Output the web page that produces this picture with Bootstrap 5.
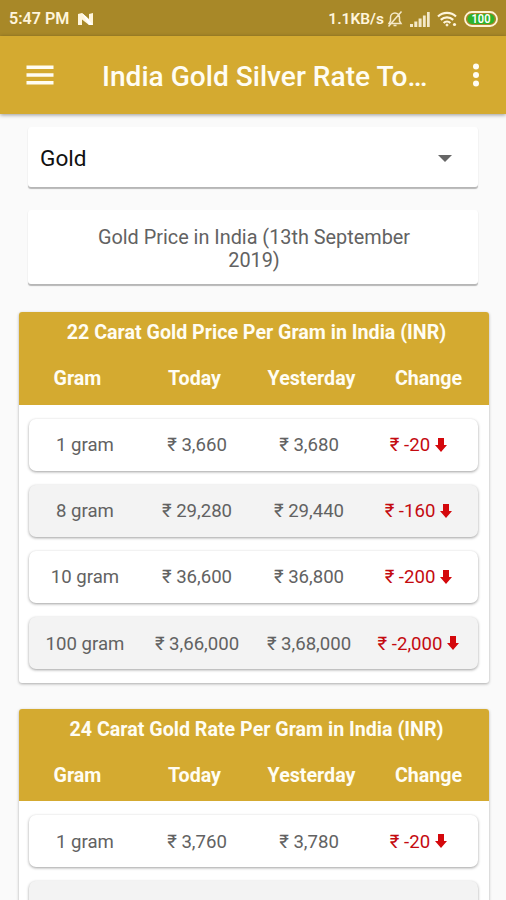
<!DOCTYPE html>
<html lang="en">
<head>
<meta charset="utf-8">
<meta name="viewport" content="width=device-width, initial-scale=1">
<title>India Gold Silver Rate Today</title>
<link href="https://cdn.jsdelivr.net/npm/bootstrap@5.3.0/dist/css/bootstrap.min.css" rel="stylesheet">
<style>
  html, body { height: 900px; overflow: hidden; }
  body { background: #fafafa; font-family: Roboto, "Liberation Sans", sans-serif; color: #626262; }
  .status-bar { height: 36px; background: #a88828; color: #fff5dc; font-size: 16.1px; font-weight: 600; padding: 2px 8px 0 9px; line-height: 1; }
  .st-time, .st-speed { padding-top: 1px; }
  .st-speed { font-size: 15.5px; }
  .status-bar svg, .app-bar svg { display: block; flex: none; }
  .st-bell { margin-left: 3px; }
  .st-signal { margin-left: 7px; }
  .st-wifi, .st-battery { margin-left: 7px; }
  .app-bar { height: 78px; background: #d4aa30; color: #fffdf3; padding: 0 20px 0 26px; box-shadow: 0 1px 4px rgba(0,0,0,.4); }
  .app-title { font-size: 28.1px; font-weight: 500; line-height: 1; margin-left: 48px; white-space: nowrap; padding-top: 4px; }
  .page { height: 786px; overflow: hidden; padding: 13px 28px 0; }
  .picker { height: 60px; border-radius: 3px; padding: 3px 26px 0 12px; color: #111; font-size: 22.6px; background: #fff; box-shadow: 0 1.5px 1px rgba(0,0,0,.27); }
  .caption-box { height: 74px; margin-top: 22.5px; border-radius: 3px; background: #fff; box-shadow: 0 1.5px 1px rgba(0,0,0,.27); font-size: 19.85px; line-height: 23px; padding: 5px 58px 0 60px; }
  .rates { margin: 28.5px -11px 0 -9px; background: #fff; border-radius: 3px; box-shadow: 0 1px 3px rgba(0,0,0,.32); padding-bottom: 14px; }
  .rates + .rates { margin-top: 25.5px; }
  .rates-head { height: 92.5px; background: #d4aa30; color: #fffdf3; font-weight: 700; border-radius: 3px 3px 0 0; font-size: 19.65px; line-height: 24px; padding-top: 9px; white-space: nowrap; }
  .head-title { padding-left: 5px; }
  .rates-head .labels { margin-top: 22px; padding-right: 2px; }
  .rates-body { padding: 14px 11px 0 10px; display: grid; row-gap: 14.2px; }
  .rate-row { height: 52px; border-radius: 7px; background: #fff; box-shadow: 0 1px 3px rgba(0,0,0,.38); font-size: 18.6px; white-space: nowrap; padding: 3px 1px 0 0; }
  .rate-row:nth-child(even) { background: #f3f3f3; }
  .drop { color: #c40a10; padding-right: 5px; }
  .drop svg { margin-left: 5px; vertical-align: -.5px; }
</style>
</head>
<body>
<header>
  <div class="status-bar d-flex align-items-center">
    <span class="st-time">5:47 PM</span>
    <svg class="ms-2" width="17" height="13" viewBox="0 0 17 13"><path d="M1 1l4-1 7 6V1l4-1v12h-4L5 6.500V12H1z" fill="#fff5dc"/><path d="M5 0l7 12h4L9.500 4z" fill="#fff"/></svg>
    <span class="st-speed ms-auto">1.1KB/s</span>
    <svg class="st-bell" width="16" height="18" viewBox="0 0 16 18" fill="none" stroke="#f4e8c8" stroke-width="1.500"><path d="M2 13.500h12l-1.500-2.500V7.500A4.500 4.500 0 0 0 8 3a4.500 4.500 0 0 0-4.500 4.500V11zM6.500 15.500h3M14.500 1.500L1.500 16.500"/></svg>
    <svg class="st-signal" width="20" height="15" viewBox="0 0 20 15" fill="#f4e8c8"><path d="M0 12h3v3H0zM4.300 9.500h3V15h-3zM8.600 6.500h3V15h-3zM12.900 3.500h2.800V15h-2.800zM17 0h2.700v15H17z"/></svg>
    <svg class="st-wifi" width="20" height="16" viewBox="0 0 20 16" fill="none" stroke="#fff5dc" stroke-width="2.200"><path d="M1 5.500a13 13 0 0 1 18 0M3.800 8.900a9 9 0 0 1 12.400 0M6.600 12a5 5 0 0 1 6.800 0"/><circle cx="10" cy="14" r="1" fill="#fff5dc" stroke-width="1"/><circle cx="17.500" cy="13.500" r="1.600" fill="#fff5dc" stroke="none"/></svg>
    <svg class="st-battery" width="34" height="16" viewBox="0 0 34 16"><rect x="1" y="1" width="32" height="14" rx="7" fill="none" stroke="#fff3d6" stroke-width="1.800"/><rect x="3.500" y="3" width="27" height="10" rx="5" fill="#2db32a"/><text x="17" y="12.300" text-anchor="middle" font-size="12" font-weight="600" fill="#fff" textLength="19" lengthAdjust="spacingAndGlyphs">100</text></svg>
  </div>
  <nav class="app-bar d-flex align-items-center position-relative">
    <svg width="28" height="20" viewBox="0 0 28 20" fill="#fffdf3"><path d="M.5.500h27V4H.5zM.5 8.200h27v3.600H.5zM.5 16h27v3.500H.5z"/></svg>
    <div class="app-title">India Gold Silver Rate To…</div>
    <svg class="ms-auto" width="20" height="24" viewBox="0 0 20 24" fill="#fffdf3"><circle cx="10" cy="3.500" r="3"/><circle cx="10" cy="12" r="3"/><circle cx="10" cy="20.500" r="3"/></svg>
  </nav>
</header>

<main class="page">
  <div class="picker d-flex align-items-center justify-content-between">
    <span>Gold</span>
    <svg width="14" height="7" viewBox="0 0 14 7"><path d="M0 0h14L7 7z" fill="#666"/></svg>
  </div>
  <div class="caption-box d-flex align-items-center text-center"><span class="w-100">Gold Price in India (13th September 2019)</span></div>

  <section class="rates">
    <div class="rates-head text-center">
      <div class="head-title">22 Carat Gold Price Per Gram in India (INR)</div>
      <div class="labels row g-0"><div class="col-3">Gram</div><div class="col-3">Today</div><div class="col-3">Yesterday</div><div class="col-3">Change</div></div>
    </div>
    <div class="rates-body text-center">
      <div class="rate-row row g-0 align-items-center"><div class="col-3">1 gram</div><div class="col-3">₹ 3,660</div><div class="col-3">₹ 3,680</div><div class="col-3 drop">₹ -20<svg width="12" height="14" viewBox="0 0 12 14"><path d="M3 0h6v7h3l-6 7-6-7h3z" fill="#d4080c"/></svg></div></div>
      <div class="rate-row row g-0 align-items-center"><div class="col-3">8 gram</div><div class="col-3">₹ 29,280</div><div class="col-3">₹ 29,440</div><div class="col-3 drop">₹ -160<svg width="12" height="14" viewBox="0 0 12 14"><path d="M3 0h6v7h3l-6 7-6-7h3z" fill="#d4080c"/></svg></div></div>
      <div class="rate-row row g-0 align-items-center"><div class="col-3">10 gram</div><div class="col-3">₹ 36,600</div><div class="col-3">₹ 36,800</div><div class="col-3 drop">₹ -200<svg width="12" height="14" viewBox="0 0 12 14"><path d="M3 0h6v7h3l-6 7-6-7h3z" fill="#d4080c"/></svg></div></div>
      <div class="rate-row row g-0 align-items-center"><div class="col-3">100 gram</div><div class="col-3">₹ 3,66,000</div><div class="col-3">₹ 3,68,000</div><div class="col-3 drop">₹ -2,000<svg width="12" height="14" viewBox="0 0 12 14"><path d="M3 0h6v7h3l-6 7-6-7h3z" fill="#d4080c"/></svg></div></div>
    </div>
  </section>

  <section class="rates">
    <div class="rates-head text-center">
      <div class="head-title">24 Carat Gold Rate Per Gram in India (INR)</div>
      <div class="labels row g-0"><div class="col-3">Gram</div><div class="col-3">Today</div><div class="col-3">Yesterday</div><div class="col-3">Change</div></div>
    </div>
    <div class="rates-body text-center">
      <div class="rate-row row g-0 align-items-center"><div class="col-3">1 gram</div><div class="col-3">₹ 3,760</div><div class="col-3">₹ 3,780</div><div class="col-3 drop">₹ -20<svg width="12" height="14" viewBox="0 0 12 14"><path d="M3 0h6v7h3l-6 7-6-7h3z" fill="#d4080c"/></svg></div></div>
      <div class="rate-row row g-0"></div>
    </div>
  </section>
</main>
<script src="https://cdn.jsdelivr.net/npm/bootstrap@5.3.0/dist/js/bootstrap.bundle.min.js"></script>
</body>
</html>
